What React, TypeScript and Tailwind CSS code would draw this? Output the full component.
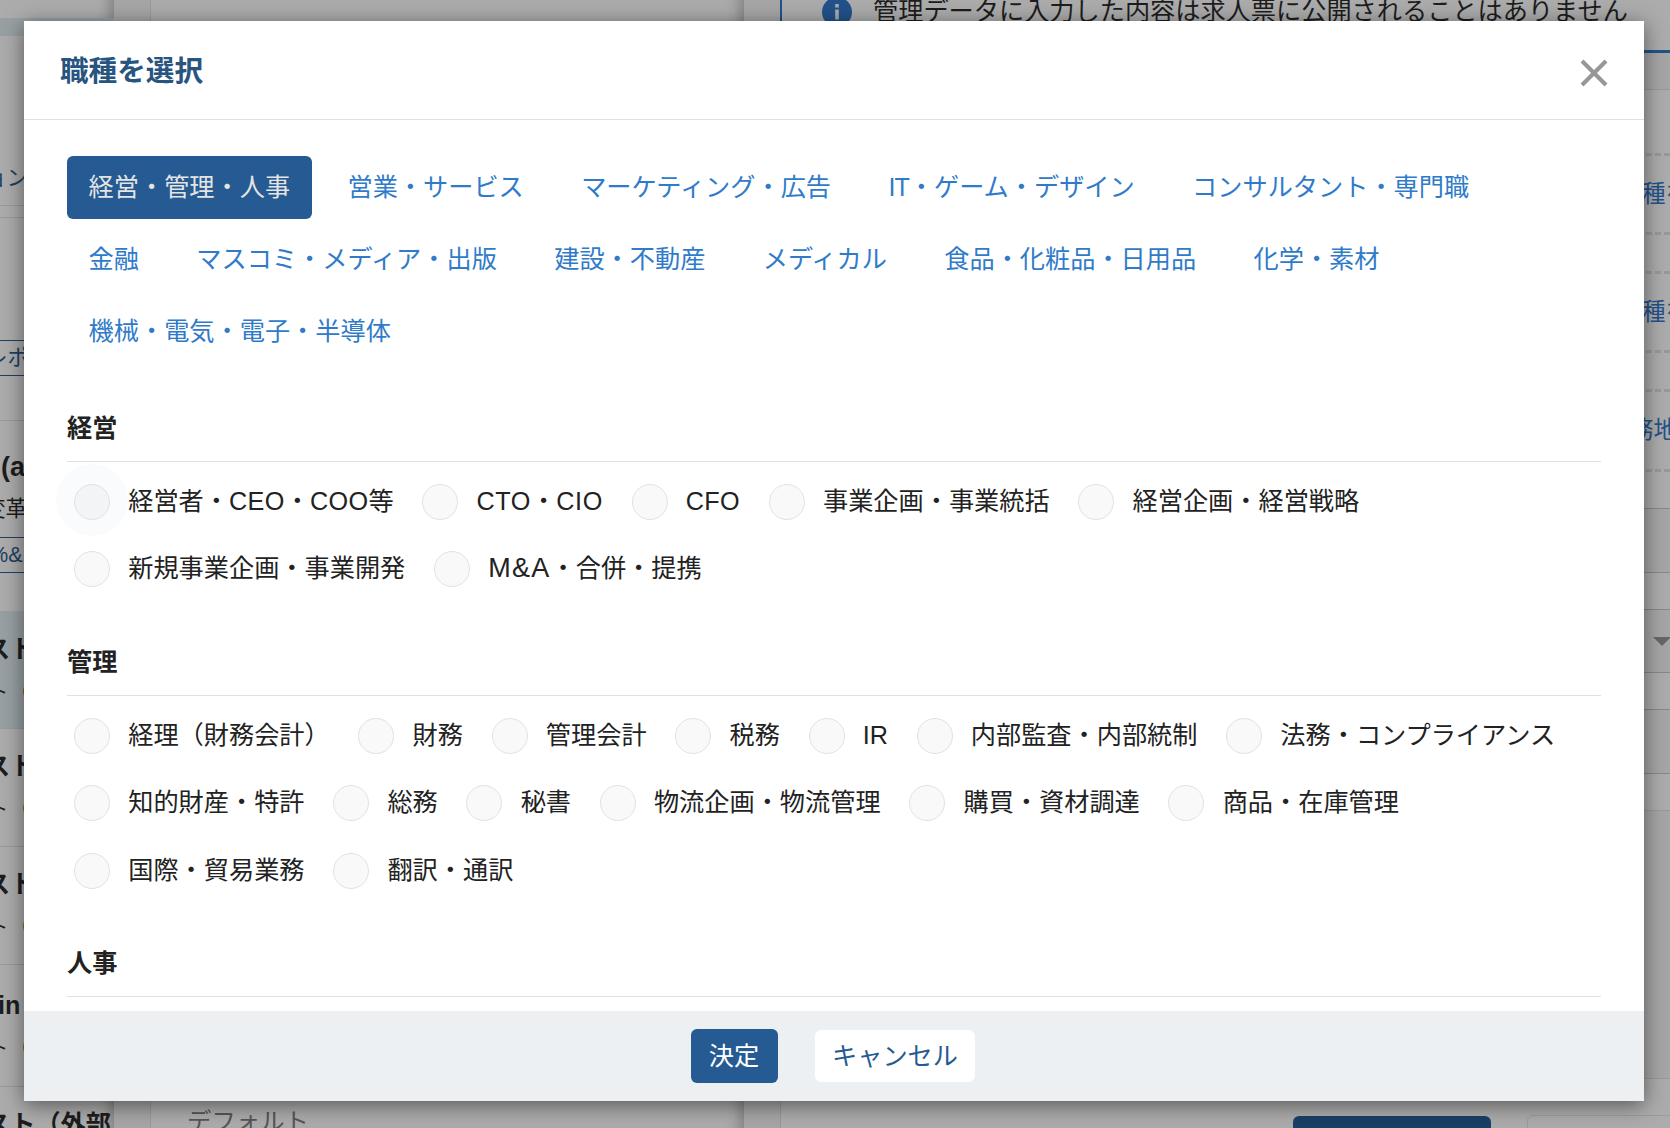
import React from 'react';
import { X } from 'lucide-react';

const tabs = [
  '経営・管理・人事',
  '営業・サービス',
  'マーケティング・広告',
  'IT・ゲーム・デザイン',
  'コンサルタント・専門職',
  '金融',
  'マスコミ・メディア・出版',
  '建設・不動産',
  'メディカル',
  '食品・化粧品・日用品',
  '化学・素材',
  '機械・電気・電子・半導体',
];

const sections = [
  {
    title: '経営',
    options: ['経営者・CEO・COO等', 'CTO・CIO', 'CFO', '事業企画・事業統括', '経営企画・経営戦略', '新規事業企画・事業開発', 'M&A・合併・提携'],
  },
  {
    title: '管理',
    options: [
      '経理（財務会計）', '財務', '管理会計', '税務', 'IR', '内部監査・内部統制', '法務・コンプライアンス',
      '知的財産・特許', '総務', '秘書', '物流企画・物流管理', '購買・資材調達', '商品・在庫管理',
      '国際・貿易業務', '翻訳・通訳',
    ],
  },
  { title: '人事', options: [] },
];

const latinTracking: Record<string, string> = {
  CEO: 'tracking-[0.4px]',
  COO: 'tracking-[0.4px]',
  CTO: 'tracking-[0.6px]',
  CIO: 'tracking-[0.6px]',
  CFO: 'tracking-[0.4px]',
  'M&A': 'text-[27px] leading-none tracking-[1.3px]',
  IT: 'tracking-[-1px]',
};

const Label: React.FC<{ text: string }> = ({ text }) => (
  <span>
    {text.split(/([A-Z&]+)/).map((part, i) => (
      <span key={i} className={latinTracking[part]}>{part}</span>
    ))}
  </span>
);

const ListItem: React.FC<{ className: string; title: string; titleClass?: string }> = ({ className, title, titleClass = '-ml-[15px]' }) => (
  <div className={`shrink-0 border-b border-[#999] whitespace-nowrap text-[#1d1d1d] ${className}`}>
    <div className={`text-[25.2px] leading-[38px] font-bold ${titleClass}`}>{title}</div>
    <div className="-ml-[13px] mt-[8px] text-[21.6px] leading-[32px]">ト（</div>
  </div>
);

const Sidebar: React.FC = () => (
  <div className="flex w-[114px] shrink-0 flex-col overflow-hidden bg-[#acacac] whitespace-nowrap shadow-[inset_-16px_0_14px_-12px_rgba(0,0,0,0.25)]">
    <div className="h-[18px] shrink-0" />
    <div className="h-[18px] shrink-0 bg-[#98a0a4]" />
    <div className="h-[170px] shrink-0 border-b border-[#999] pt-[126px] text-[21.6px] leading-[32px] text-[#1c4164]">
      <div className="-ml-[15px]">ョン</div>
    </div>
    <div className="h-[12px] shrink-0 border-b border-[#999]" />
    <div className="h-[203px] shrink-0 border-b border-[#999] pt-[122px]">
      <div className="h-[36px] border-y border-[#1c4164] text-[21.6px] leading-[34px] text-[#1c4164]">
        <div className="-ml-[14px]">レポート</div>
      </div>
    </div>
    <div className="h-[190px] shrink-0 text-[#1d1d1d]">
      <div className="pt-[26px] pl-[1px] text-[27px] leading-[40px] font-bold">(a</div>
      <div className="-ml-[16px] mt-[3px] text-[21.6px] leading-[38px]">変革</div>
      <div className="mt-[9px] h-[36px] border-y border-[#1c4164] text-[21.6px] leading-[34px] text-[#1c4164]">
        <div className="-ml-[11px]">%&amp;</div>
      </div>
    </div>
    <ListItem className="h-[118px] bg-[#98a0a4] pt-[19px]" title="スト" />
    <ListItem className="h-[118px] pt-[18px]" title="スト" />
    <ListItem className="h-[118px] pt-[18px]" title="スト" />
    <ListItem className="h-[122px] pt-[21px]" title="in" titleClass="-ml-[2px]" />
    <ListItem className="h-[118px] pt-[18px]" title="スト（外部" />
  </div>
);

const DashedRow: React.FC<{ className: string; label?: string }> = ({ className, label }) => (
  <div className={`shrink-0 border-b-3 border-dashed border-[#999] bg-[#acacac] text-[23.5px] text-[#22528a] whitespace-nowrap ${className}`}>{label}</div>
);

const Page: React.FC = () => (
  <div className="absolute inset-0 flex overflow-hidden bg-[#a6a6a6]">
    <Sidebar />
    <div className="ml-[36px] flex w-[594px] shrink-0 items-end border-l border-[#999] bg-[#acacac] shadow-[inset_-16px_0_14px_-12px_rgba(0,0,0,0.25)]">
      <div className="-mb-[13px] pl-[36px] text-[24.4px] leading-[38px] text-[#555]">デフォルト</div>
    </div>
    <div className="flex w-[926px] shrink-0 flex-col overflow-hidden pl-[36px]">
      <div className="flex h-[53px] shrink-0 items-start border-b-3 border-l-2 border-[#22528a] bg-[#acacac] pl-[40px]">
        <svg className="-mt-[3px] shrink-0" width="30" height="30" viewBox="0 0 30 30">
          <circle cx="15" cy="15" r="15" fill="#22528a" />
          <path d="M13.2 7h3.6v3.4h-3.6zM13.2 12.4h3.6v10h-3.6z" fill="#acacac" />
        </svg>
        <div className="-mt-[8px] ml-[21px] text-[25.2px] leading-[38px] whitespace-nowrap text-[#1d1d1d]">
          管理データに入力した内容は求人票に公開されることはありません
        </div>
      </div>
      <div className="h-[37px] shrink-0 border-b border-[#999]" />
      <DashedRow className="h-[66px]" />
      <DashedRow className="h-[79px] pt-[21px] pl-[862px]" label="種を" />
      <DashedRow className="h-[39px]" />
      <DashedRow className="h-[79px] pt-[21px] pl-[862px]" label="種を" />
      <DashedRow className="h-[39px]" />
      <DashedRow className="h-[80px] pt-[21px] pl-[850px]" label="務地" />
      <div className="h-[37px] shrink-0 border-b border-[#888] bg-[#acacac]" />
      <div className="h-[64px] shrink-0 border-b border-[#888]" />
      <div className="h-[37px] shrink-0 border-b border-[#888] bg-[#acacac]" />
      <div className="flex h-[63px] shrink-0 items-center border-b border-[#888] pl-[873px]">
        <div className="h-0 w-0 border-x-9 border-t-9 border-x-transparent border-t-[#666]" />
      </div>
      <div className="h-[37px] shrink-0 border-b border-[#888] bg-[#acacac]" />
      <div className="h-[64px] shrink-0 border-b border-[#888]" />
      <div className="h-[37px] shrink-0 border-b border-[#999] bg-[#acacac]" />
      <div className="h-[268px] shrink-0 border-b border-[#999]" />
      <div className="flex flex-1 items-start overflow-hidden border-l border-[#999] bg-[#acacac] pt-[36px] pl-[512px]">
        <div className="mt-px h-[40px] w-[198px] shrink-0 rounded-md bg-[#1a4068]" />
        <div className="ml-[36px] h-[40px] w-[198px] shrink-0 rounded-md border border-[#979da6]" />
      </div>
    </div>
  </div>
);

const App: React.FC = () => {
  const activeTab = tabs[0];

  return (
    <div className="relative h-[1128px] w-[1670px] overflow-hidden font-['Liberation_Sans','Noto_Sans_CJK_JP',sans-serif]">
      <Page />

      <div className="relative mt-[21px] ml-[24px] flex h-[1080px] w-[1620px] flex-col bg-white shadow-[0_4px_20px_rgba(0,0,0,0.5)]">
        <header className="flex h-[99px] shrink-0 items-center justify-between border-b border-[#e1e1e1] pr-[26px] pl-[36px]">
          <h2 className="mt-[2px] text-[28.6px] font-bold text-[#285480]">職種を選択</h2>
          <X size={48} strokeWidth={2} strokeLinecap="butt" className="mt-[5px] text-[#979797]" />
        </header>

        <div className="min-h-0 flex-1 overflow-hidden px-[43px] pt-[36px]">
          <nav className="flex flex-wrap gap-x-[14.2px] gap-y-[9px] pr-[30px]">
            {tabs.map((tab) => (
              <button
                key={tab}
                className={`h-[63px] rounded-md px-[21.6px] pt-px text-[25.2px] whitespace-nowrap ${tab === activeTab ? 'bg-[#255a92] text-[#e4e4e4]' : 'text-[#307bc9]'}`}
              >
                <Label text={tab} />
              </button>
            ))}
          </nav>

          {sections.map((section, i) => (
            <section key={section.title} className={i === 0 ? 'mt-[46px]' : 'mt-[39.5px]'}>
              <h3 className="h-[53px] border-b border-[#e1e1e1] text-[25.2px] leading-[38px] font-bold text-[#222]">{section.title}</h3>
              <div className={`flex flex-wrap gap-x-[21.7px] pl-[7px] ${i === 0 ? 'mt-[6px]' : 'mt-[6.6px]'}`}>
                {section.options.map((option, j) => (
                  <label key={option} className="flex h-[67.5px] items-center pr-[7px] text-[25.2px] whitespace-nowrap text-[#222]">
                    <span
                      className={`mr-[18.2px] h-[36px] w-[36px] rounded-full border border-[#e2e2e2] ${i === 0 && j === 0 ? 'bg-[#f3f4f6] shadow-[0_-2px_0_18px_#fafbfd]' : 'bg-[#f9f9f9]'}`}
                    />
                    <Label text={option} />
                  </label>
                ))}
              </div>
            </section>
          ))}
        </div>

        <footer className="flex h-[90px] shrink-0 items-center justify-center gap-[37px] bg-[#ecf0f3] pr-[2px]">
          <button className="h-[54px] rounded-md bg-[#255a92] px-[18.3px] pt-px text-[25.2px] text-white">決定</button>
          <button className="h-[52px] rounded-md bg-white px-[17.5px] pt-px text-[25.2px] text-[#255a92]">キャンセル</button>
        </footer>
      </div>
    </div>
  );
};

export default App;
